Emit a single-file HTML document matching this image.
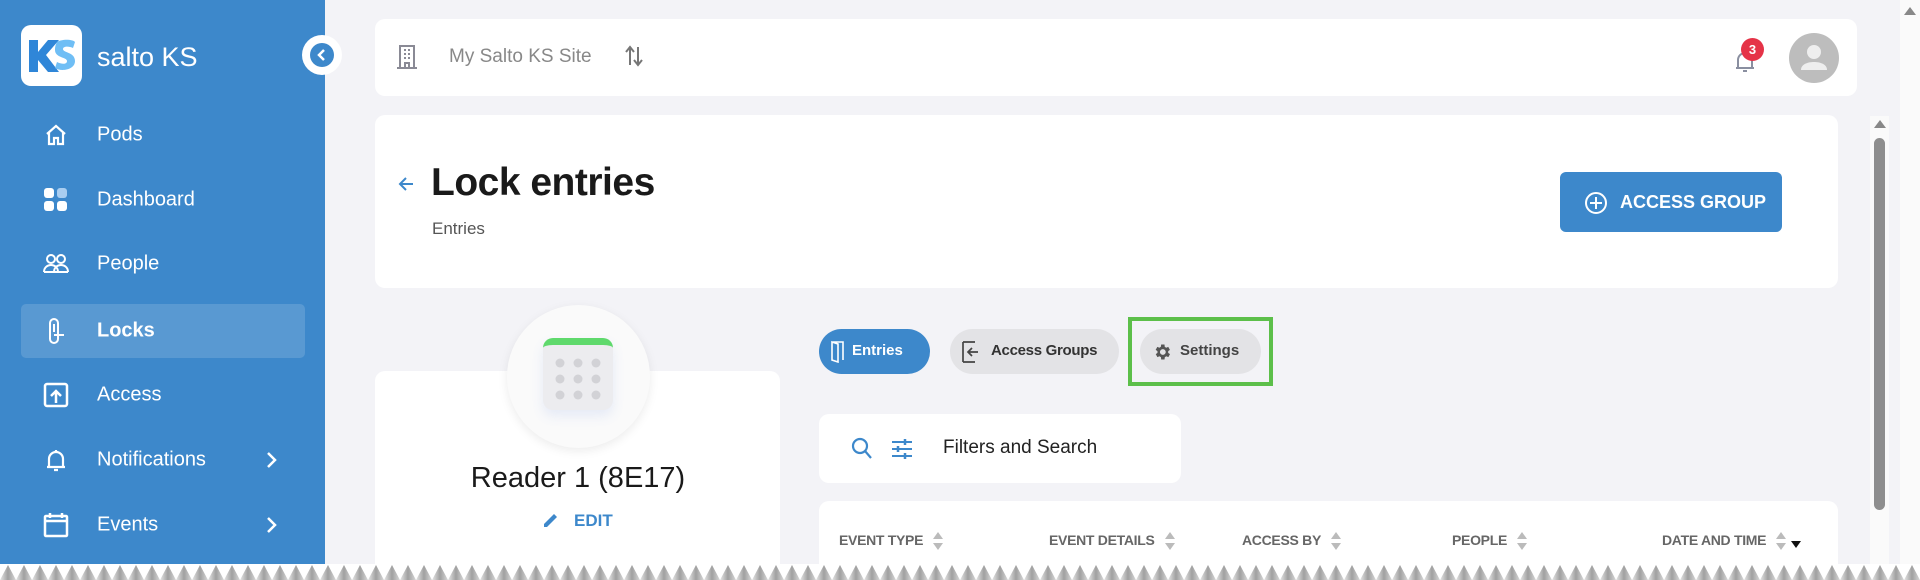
<!DOCTYPE html>
<html><head><meta charset="utf-8"><style>
*{box-sizing:border-box;margin:0;padding:0}
html{width:1920px;height:580px;overflow:hidden}
body{width:1920px;height:580px;overflow:hidden;background:#f3f3f7;font-family:"Liberation Sans",sans-serif;position:relative}
.abs{position:absolute}
.sb{left:0;top:0;width:325px;height:580px;background:#3d88cb}
.nav{position:absolute;left:97px;color:#fff;font-size:20px;transform:translateY(-50%)}
.ic{position:absolute;left:42px;width:28px;height:28px;transform:translateY(-50%)}
.card{background:#fff;border-radius:10px;position:absolute}
.th{position:absolute;top:532px;font-size:14px;font-weight:bold;color:#666;letter-spacing:-0.3px}
.sort{display:inline-block;vertical-align:middle;margin-left:10px;width:10px;height:18px;position:relative}
.sort:before,.sort:after{content:"";position:absolute;left:0;border-left:5px solid transparent;border-right:5px solid transparent}
.sort:before{top:0;border-bottom:7px solid #bbb}
.sort:after{bottom:0;border-top:7px solid #bbb}
</style></head><body>
<div class="abs sb"></div>
<div class="abs" style="left:21px;top:25px;width:61px;height:61px;background:#fff;border-radius:10px"></div>
<svg class="abs" style="left:27px;top:36px" width="50" height="40" viewBox="0 0 50 40"><path d="M2 4h9v12l10-12h11L19 19l13 17H21l-10-12v12H2z" fill="#2f86d8"/><path d="M30 6c4-3 16-3 18 0l-2 6c-4-2-10-2-10 1 0 4 12 3 12 12 0 9-14 11-20 7l2-6c4 2 10 3 10-1s-12-3-12-11c0-4 1-6 2-8z" fill="#6fbef5"/></svg>
<div class="abs" style="left:97px;top:42px;color:#fff;font-size:27px">salto KS</div>
<div class="abs" style="left:302px;top:35px;width:40px;height:40px;border-radius:50%;background:#fff"></div>
<div class="abs" style="left:310px;top:43px;width:24px;height:24px;border-radius:50%;background:#3d88cb"></div>
<svg class="abs" style="left:310px;top:43px" width="24" height="24"><path d="M14 7l-5 5 5 5" stroke="#fff" stroke-width="2.5" fill="none"/></svg>
<div class="abs" style="left:21px;top:304px;width:284px;height:54px;background:rgba(255,255,255,.15);border-radius:5px"></div>
<svg class="ic" style="top:135px" viewBox="0 0 28 28"><path d="M5 13L14 5l9 8M7 11v12h5v-6h4v6h5V11" stroke="#fff" stroke-width="2.2" fill="none"/></svg>
<div class="nav" style="top:135px">Pods</div>
<svg class="ic" style="top:200px" viewBox="0 0 28 28"><rect x="2" y="2" width="10" height="10" rx="3" fill="#fff"/><rect x="15" y="2" width="10" height="10" rx="3" fill="#a9cdf0"/><rect x="2" y="15" width="10" height="10" rx="3" fill="#fff"/><rect x="15" y="15" width="10" height="10" rx="3" fill="#fff"/></svg>
<div class="nav" style="top:200px">Dashboard</div>
<svg class="ic" style="top:264px" viewBox="0 0 28 28"><circle cx="9" cy="9" r="4" stroke="#fff" stroke-width="2" fill="none"/><circle cx="19" cy="9" r="4" stroke="#fff" stroke-width="2" fill="none"/><path d="M2 22c0-5 4-7 7-7s7 2 7 7M12 22c0-5 4-7 7-7s7 2 7 7M2 22h24" stroke="#fff" stroke-width="2" fill="none"/></svg>
<div class="nav" style="top:264px">People</div>
<svg class="ic" style="top:331px" viewBox="0 0 28 28"><rect x="8" y="2" width="8" height="24" rx="4" stroke="#fff" stroke-width="2" fill="none"/><path d="M12 7v8M12 18h10" stroke="#fff" stroke-width="2"/></svg>
<div class="nav" style="top:331px;font-weight:bold">Locks</div>
<svg class="ic" style="top:395px" viewBox="0 0 28 28"><rect x="3" y="3" width="22" height="22" rx="2" stroke="#fff" stroke-width="2.5" fill="none"/><path d="M14 22V11M9 15l5-5 5 5" stroke="#fff" stroke-width="2.5" fill="none"/></svg>
<div class="nav" style="top:395px">Access</div>
<svg class="ic" style="top:460px" viewBox="0 0 28 28"><path d="M7 21V13a7 7 0 0 1 14 0v8M5 21h18M14 4v2M12 24h4" stroke="#fff" stroke-width="2.2" fill="none"/></svg>
<div class="nav" style="top:460px">Notifications</div>
<svg class="abs" style="left:265px;top:450px" width="14" height="20"><path d="M3 3l7 7-7 7" stroke="#fff" stroke-width="2.5" fill="none"/></svg>
<svg class="ic" style="top:525px" viewBox="0 0 28 28"><rect x="3" y="5" width="22" height="20" rx="1" stroke="#fff" stroke-width="2.5" fill="none"/><path d="M3 10h22M8 2v5M20 2v5" stroke="#fff" stroke-width="2.5"/></svg>
<div class="nav" style="top:525px">Events</div>
<svg class="abs" style="left:265px;top:515px" width="14" height="20"><path d="M3 3l7 7-7 7" stroke="#fff" stroke-width="2.5" fill="none"/></svg>

<div class="card" style="left:375px;top:19px;width:1482px;height:77px"></div>
<svg class="abs" style="left:396px;top:44px" width="24" height="26" viewBox="0 0 24 26"><path d="M4 24V2h14v22M1 24h20M8 6h2M12 6h2M8 10h2M12 10h2M8 14h2M12 14h2M9 24v-5h4v5" stroke="#8a8a95" stroke-width="2" fill="none"/></svg>
<div class="abs" style="left:449px;top:46px;font-size:19px;color:#888">My Salto KS Site</div>
<svg class="abs" style="left:624px;top:44px" width="20" height="24"><path d="M6 21V4M2 8l4-5 4 5M14 3v17M10 16l4 5 4-5" stroke="#777" stroke-width="2" fill="none"/></svg>
<svg class="abs" style="left:1733px;top:48px" width="24" height="26"><path d="M5 20v-8a7 7 0 0 1 14 0v8M3 20h18M10 23h4" stroke="#8a8fa0" stroke-width="2" fill="none"/></svg>
<div class="abs" style="left:1741px;top:38px;width:23px;height:23px;border-radius:50%;background:#e53347;color:#fff;font-size:13px;font-weight:bold;text-align:center;line-height:23px">3</div>
<div class="abs" style="left:1789px;top:33px;width:50px;height:50px;border-radius:50%;background:#bdbdbd"></div>
<svg class="abs" style="left:1789px;top:33px" width="50" height="50"><circle cx="25" cy="19" r="7" fill="#eee"/><path d="M12 37c0-6 7-8 13-8s13 2 13 8z" fill="#eee"/></svg>

<div class="card" style="left:375px;top:115px;width:1463px;height:173px"></div>
<svg class="abs" style="left:396px;top:174px" width="20" height="20"><path d="M17 10H4M10 4l-6 6 6 6" stroke="#3d88cb" stroke-width="2" fill="none"/></svg>
<div class="abs" style="left:431px;top:161px;font-size:39px;font-weight:bold;color:#1a1a1a;letter-spacing:-0.5px">Lock entries</div>
<div class="abs" style="left:432px;top:219px;font-size:17px;color:#555">Entries</div>
<div class="abs" style="left:1560px;top:172px;width:222px;height:60px;background:#3d88cb;border-radius:6px"></div>
<svg class="abs" style="left:1584px;top:191px" width="24" height="24"><circle cx="12" cy="12" r="10" stroke="#fff" stroke-width="2" fill="none"/><path d="M12 6v12M6 12h12" stroke="#fff" stroke-width="2"/></svg>
<div class="abs" style="left:1620px;top:192px;color:#fff;font-weight:bold;font-size:18px">ACCESS GROUP</div>

<div class="card" style="left:375px;top:371px;width:405px;height:209px;border-radius:10px 10px 0 0"></div>
<div class="abs" style="left:507px;top:305px;width:143px;height:143px;border-radius:50%;background:#fafafa;box-shadow:0 3px 10px rgba(0,0,0,.08)"></div>
<div class="abs" style="left:543px;top:338px;width:70px;height:72px;border-radius:10px;background:#ececef;border-top:7px solid #5fd96c;box-shadow:0 6px 12px rgba(80,120,220,.12)"></div>
<svg class="abs" style="left:543px;top:338px" width="70" height="72"><g fill="#d2d2d6"><circle cx="17" cy="25" r="4.5"/><circle cx="35" cy="25" r="4.5"/><circle cx="53" cy="25" r="4.5"/><circle cx="17" cy="41" r="4.5"/><circle cx="35" cy="41" r="4.5"/><circle cx="53" cy="41" r="4.5"/><circle cx="17" cy="57" r="4.5"/><circle cx="35" cy="57" r="4.5"/><circle cx="53" cy="57" r="4.5"/></g></svg>
<div class="abs" style="left:378px;top:462px;width:400px;text-align:center;font-size:29px;color:#1a1a1a">Reader 1 (8E17)</div>
<svg class="abs" style="left:541px;top:510px" width="20" height="20"><path d="M3 17v-3l10-10 3 3-10 10z" fill="#3d88cb"/></svg>
<div class="abs" style="left:574px;top:511px;font-size:17px;font-weight:bold;color:#3d88cb">EDIT</div>

<div class="abs" style="left:819px;top:329px;width:111px;height:45px;border-radius:23px;background:#3d88cb"></div>
<svg class="abs" style="left:830px;top:339px" width="16" height="24"><path d="M2 3h11v18M2 3l6 2v18l-6-2z" stroke="#fff" stroke-width="1.6" fill="none"/></svg>
<div class="abs" style="left:852px;top:342px;font-size:15px;font-weight:bold;color:#fff">Entries</div>
<div class="abs" style="left:950px;top:329px;width:169px;height:45px;border-radius:23px;background:#e3e3e6"></div>
<svg class="abs" style="left:960px;top:340px" width="22" height="24"><path d="M3 2v20M3 2h12M3 22h12M18 12H8M12 8l-4 4 4 4" stroke="#444" stroke-width="1.7" fill="none"/></svg>
<div class="abs" style="left:991px;top:342px;font-size:15px;color:#333;font-weight:bold;letter-spacing:-0.3px">Access Groups</div>
<div class="abs" style="left:1128px;top:317px;width:145px;height:69px;border:4px solid #5cbf4a"></div>
<div class="abs" style="left:1140px;top:329px;width:121px;height:45px;border-radius:23px;background:#e3e3e6"></div>
<svg class="abs" style="left:1152px;top:342px" width="20" height="20" viewBox="0 0 24 24"><path fill="#555" d="M19.4 13a7.8 7.8 0 0 0 0-2l2.1-1.6-2-3.5-2.5 1a7 7 0 0 0-1.7-1L15 3h-4l-.4 2.9a7 7 0 0 0-1.7 1l-2.5-1-2 3.5L6.6 11a7.8 7.8 0 0 0 0 2l-2.1 1.6 2 3.5 2.5-1a7 7 0 0 0 1.7 1L11 21h4l.4-2.9a7 7 0 0 0 1.7-1l2.5 1 2-3.5zM13 15.5a3.5 3.5 0 1 1 0-7 3.5 3.5 0 0 1 0 7z"/></svg>
<div class="abs" style="left:1180px;top:342px;font-size:15px;font-weight:bold;color:#444">Settings</div>

<div class="card" style="left:819px;top:414px;width:362px;height:69px"></div>
<svg class="abs" style="left:850px;top:436px" width="24" height="26"><circle cx="10" cy="10" r="7" stroke="#3d88cb" stroke-width="2.2" fill="none"/><path d="M15 15l6 7" stroke="#3d88cb" stroke-width="2.2"/></svg>
<svg class="abs" style="left:890px;top:437px" width="24" height="24"><path d="M2 5h20M2 12h20M2 19h20" stroke="#3d88cb" stroke-width="2"/><path d="M15 2v6M8 9v6M15 16v6" stroke="#3d88cb" stroke-width="2.5"/></svg>
<div class="abs" style="left:943px;top:437px;font-size:19px;color:#222">Filters and Search</div>

<div class="card" style="left:819px;top:501px;width:1019px;height:79px;border-radius:10px 10px 0 0"></div>
<div class="th" style="left:839px">EVENT TYPE<span class="sort"></span></div>
<div class="th" style="left:1049px">EVENT DETAILS<span class="sort"></span></div>
<div class="th" style="left:1242px">ACCESS BY<span class="sort"></span></div>
<div class="th" style="left:1452px">PEOPLE<span class="sort"></span></div>
<div class="th" style="left:1662px">DATE AND TIME<span class="sort"></span></div>
<div class="abs" style="left:1791px;top:541px;border-left:5px solid transparent;border-right:5px solid transparent;border-top:7px solid #111"></div>

<div class="abs" style="left:1870px;top:116px;width:19px;height:464px;background:#fafafa"></div>
<div class="abs" style="left:1874px;top:120px;border-left:6px solid transparent;border-right:6px solid transparent;border-bottom:8px solid #888"></div>
<div class="abs" style="left:1874px;top:138px;width:11px;height:372px;border-radius:6px;background:#8e8e8e"></div>
<div class="abs" style="left:1900px;top:0;width:20px;height:580px;background:#fafafa"></div>
<div class="abs" style="left:1904px;top:7px;border-left:6px solid transparent;border-right:6px solid transparent;border-bottom:8px solid #888"></div>

<svg class="abs" style="left:0;top:564px" width="1920" height="16"><defs><linearGradient id="g" x1="0" y1="0" x2="1" y2="0"><stop offset="0" stop-color="#e6e6e6"/><stop offset="0.5" stop-color="#a0a0a0"/><stop offset="1" stop-color="#d8d8d8"/></linearGradient><pattern id="z" width="16" height="16" patternUnits="userSpaceOnUse"><path d="M0 16L8 1 16 16z" fill="url(#g)"/></pattern></defs><rect width="1920" height="16" fill="#fff"/><rect width="1920" height="16" fill="url(#z)"/></svg>
</body></html>
